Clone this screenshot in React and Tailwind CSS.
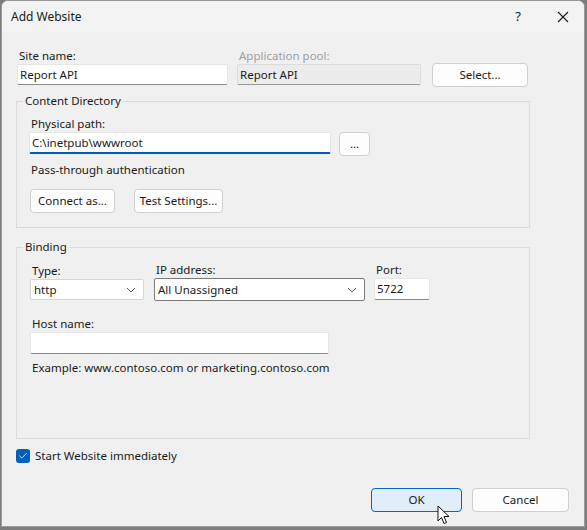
import { Check } from 'lucide-react';

// ── small building blocks ─────────────────────────────────────────────────────

const FONT = { fontFamily: '"Noto Sans", "Liberation Sans", sans-serif' };

function Label({ children, muted = false, className = '' }) {
  return (
    <div className={`h-[19px] pt-[3px] pl-[2px] text-[11.5px] leading-[16px] ${muted ? 'text-[#9e9e9e]' : 'text-[#1a1a1a]'} ${className}`}>
      {children}
    </div>
  );
}

function TextBox({ value = '', className = '', focused = false, disabled = false }) {
  const edge = focused
    ? 'bg-white border-[#e6e6e6] border-b-2 border-b-[#005fb8]'
    : disabled
      ? 'bg-[#ececec] border-[#dcdcdc] border-b-[#9a9a9a]'
      : 'bg-white border-[#e6e6e6] border-b-[#8a8a8a]';
  return (
    <div className={`flex items-center px-[2px] text-[11.5px] leading-[16px] border rounded-[2px] text-[#1a1a1a] ${edge} ${className}`}>
      {value}
    </div>
  );
}

function Chevron() {
  return (
    <svg width="10" height="6" viewBox="0 0 10 6" className="flex-shrink-0">
      <path d="M1 1 L5 5 L9 1" fill="none" stroke="#5c5c5c" strokeWidth="1" />
    </svg>
  );
}

function Select({ value, className = '', dark = false }) {
  return (
    <div
      className={[
        'flex items-center justify-between pl-[3px] pr-[7px] text-[11.5px] leading-[16px] bg-white border rounded-[2px] text-[#1a1a1a]',
        dark ? 'border-[#7a7a7a]' : 'border-[#d6d6d6]',
        className,
      ].join(' ')}
    >
      <span>{value}</span>
      <Chevron />
    </div>
  );
}

function Btn({ children, className = '', primary = false }) {
  return (
    <div
      className={[
        'flex items-center justify-center h-[24px] rounded-[4px] border text-[11.5px] leading-[16px] text-[#1a1a1a]',
        primary ? 'bg-[#e0eef9] border-[#0067c0]' : 'bg-[#fdfdfd] border-[#d0d0d0]',
        className,
      ].join(' ')}
    >
      {children}
    </div>
  );
}

function Group({ title, children, className = '' }) {
  return (
    <fieldset className={`border border-[#dcdcdc] ${className}`}>
      <legend className="ml-[6px] px-[2px] text-[11.5px] leading-[16px] text-[#1a1a1a]">{title}</legend>
      {children}
    </fieldset>
  );
}

// ── page ──────────────────────────────────────────────────────────────────────

export default function App() {
  return (
    <div className="w-[587px] h-[530px] bg-[#7d7d7d] overflow-hidden" style={FONT}>
      <div className="relative ml-[1px] w-[584px] h-[527px] flex flex-col bg-[#f0f0f0] border border-[#9a9a9a] rounded-t-[7px] overflow-hidden">

        {/* Title bar */}
        <div className="h-[31px] flex items-center bg-[#f3f3f3] text-[12px] text-[#1a1a1a]">
          <span className="pl-[9px] flex-1">Add Website</span>
          <span className="w-[14px] text-center mr-[32px] text-[13px]">?</span>
          <svg width="12" height="12" viewBox="0 0 12 12" className="mr-[15px]">
            <path d="M1 1 L11 11 M11 1 L1 11" stroke="#1a1a1a" strokeWidth="1.1" />
          </svg>
        </div>

        {/* Body */}
        <div className="flex-1 flex flex-col pl-[14px] pr-[14px] pt-[13px]">

          {/* Site name / app pool */}
          <div className="flex items-end">
            <div className="flex flex-col ml-[1px] w-[211px]">
              <Label>Site name:</Label>
              <TextBox value="Report API" className="h-[21px]" />
            </div>
            <div className="flex flex-col ml-[9px] w-[184px]">
              <Label muted>Application pool:</Label>
              <TextBox value="Report API" className="h-[21px]" disabled />
            </div>
            <Btn className="ml-[11px] w-[96px] mb-[-2px]">Select...</Btn>
          </div>

          {/* Content Directory */}
          <Group title="Content Directory" className="mt-[8px] w-[514px]">
            <div className="pl-[12px] pt-[4px] pb-[14px]">
              <Label>Physical path:</Label>
              <div className="flex items-start">
                <TextBox value="C:\inetpub\wwwroot" className="h-[22px] w-[302px]" focused />
                <Btn className="ml-[8px] w-[31px] text-[10px]">...</Btn>
              </div>
              <div className="mt-[6px] pl-[2px] h-[16px] text-[11.5px] leading-[16px] text-[#1a1a1a]">Pass-through authentication</div>
              <div className="flex mt-[11px] ml-[1px]">
                <Btn className="w-[85px]">Connect as...</Btn>
                <Btn className="ml-[19px] w-[89px]">Test Settings...</Btn>
              </div>
            </div>
          </Group>

          {/* Binding */}
          <Group title="Binding" className="mt-[11px] w-[514px]">
            <div className="pl-[13px] pt-[4px] pb-[62px]">
              <div className="flex items-end">
                <div className="flex flex-col w-[114px]">
                  <Label>Type:</Label>
                  <Select value="http" className="h-[21px] mb-[1px]" />
                </div>
                <div className="flex flex-col ml-[10px] w-[211px]">
                  <Label>IP address:</Label>
                  <Select value="All Unassigned" className="h-[23px]" dark />
                </div>
                <div className="flex flex-col ml-[9px] w-[56px]">
                  <Label>Port:</Label>
                  <TextBox value="5722" className="h-[22px] mb-[1px]" />
                </div>
              </div>
              <Label className="mt-[12px]">Host name:</Label>
              <TextBox className="h-[22px] w-[299px]" />
              <div className="mt-[6px] pl-[2px] h-[16px] text-[11.5px] leading-[16px] text-[#1a1a1a]">
                Example: www.contoso.com or marketing.contoso.com
              </div>
            </div>
          </Group>

          {/* Checkbox */}
          <div className="flex items-center mt-[9px]">
            <div className="w-[14px] h-[14px] rounded-[3px] bg-[#005fb8] flex items-center justify-center">
              <Check size={10} color="white" strokeWidth={2} />
            </div>
            <span className="ml-[5px] text-[11.5px] leading-[16px] text-[#1a1a1a]">Start Website immediately</span>
          </div>

          {/* Footer buttons */}
          <div className="flex justify-end mt-[24px] pr-[1px]">
            <Btn primary className="w-[91px]">OK</Btn>
            <Btn className="ml-[10px] w-[97px]">Cancel</Btn>
          </div>
        </div>

        {/* Mouse pointer */}
        <svg width="14" height="20" viewBox="0 0 14 20" className="absolute left-[435px] top-[504px]">
          <path d="M1 1 L1 16 L4.5 12.5 L7 18.5 L9.5 17.5 L7 11.5 L12 11.5 Z" fill="white" stroke="#111" strokeWidth="1" strokeLinejoin="round" />
        </svg>
      </div>
    </div>
  );
}
